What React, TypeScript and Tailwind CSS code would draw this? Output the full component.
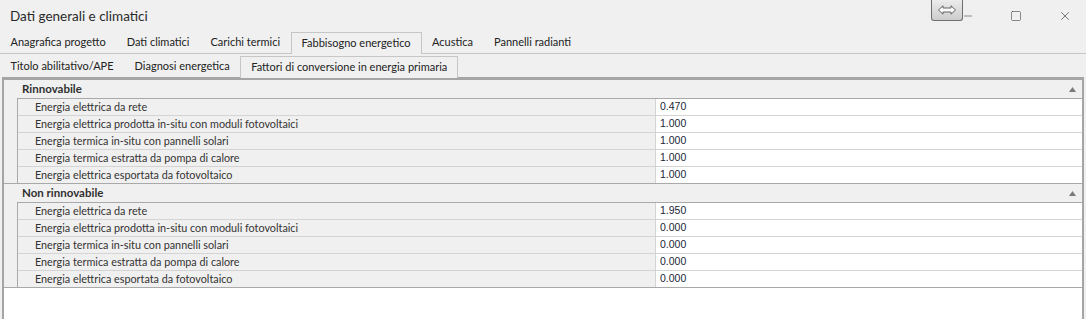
import { Minus, Square, X } from 'lucide-react'

const TOP_TABS = ['Anagrafica progetto', 'Dati climatici', 'Carichi termici', 'Fabbisogno energetico', 'Acustica', 'Pannelli radianti']
const SUB_TABS = ['Titolo abilitativo/APE', 'Diagnosi energetica', 'Fattori di conversione in energia primaria']

const LABELS = [
  'Energia elettrica da rete',
  'Energia elettrica prodotta in-situ con moduli fotovoltaici',
  'Energia termica in-situ con pannelli solari',
  'Energia termica estratta da pompa di calore',
  'Energia elettrica esportata da fotovoltaico',
]

const GROUPS = [
  { title: 'Rinnovabile', values: ['0.470', '1.000', '1.000', '1.000', '1.000'] },
  { title: 'Non rinnovabile', values: ['1.950', '0.000', '0.000', '0.000', '0.000'] },
]

function Tab({ label, active }: { label: string; active: boolean }) {
  if (active) {
    return (
      <div className="mb-[-1px] flex h-[22px] items-center border border-b-0 border-[#c6c6c6] bg-[#f0f0f0] px-[10px]">
        {label}
      </div>
    )
  }
  return <div className="flex h-[21px] items-center px-[10.5px]">{label}</div>
}

function Group({ title, values }: { title: string; values: string[] }) {
  return (
    <div className="border-b border-[#a9a9a9]">
      <div className="flex h-[18px] items-center justify-between pl-[18px] pr-[6px]">
        <span className="text-[11.5px] font-bold text-[#303030]">{title}</span>
        <svg width="7" height="5" viewBox="0 0 7 5"><path d="M0 5 L3.5 0 L7 5 Z" fill="#7a7a7a" /></svg>
      </div>
      {LABELS.map((label, i) => (
        <div key={label} className="flex h-[17px]">
          <div className="w-[14px] shrink-0 border-r border-[#a9a9a9]" />
          <div className={`flex flex-1 ${i === 0 ? 'border-t border-[#a9a9a9]' : 'border-t border-[#d4d4d4]'}`}>
            <div className="flex w-[637px] shrink-0 items-center pl-[17px] text-[#333]">{label}</div>
            <div className="flex flex-1 items-center border-l border-[#d4d4d4] bg-white pl-[4px] font-['Liberation_Sans',sans-serif] text-[10.5px] text-[#1c2536]">{values[i]}</div>
          </div>
        </div>
      ))}
    </div>
  )
}

export default function App() {
  return (
    <div className="h-[319px] w-[1086px] overflow-hidden bg-[#f0f0f0] font-['Lato',sans-serif] text-[10.8px] text-[#222]">
      <div className="flex h-[32px] items-center justify-between pl-[10px]">
        <span className="text-[13.5px] text-[#2a2a2a]">Dati generali e climatici</span>
        <div className="flex h-full items-center pr-[14px]">
          <div className="flex h-[21px] w-[32px] items-center justify-center self-start rounded-b-[3px] border border-t-0 border-[#6e6e6e] bg-gradient-to-b from-[#ececec] to-[#cdcdcd]">
            <svg width="18" height="10" viewBox="0 0 18 10">
              <path d="M0.5 5 L5 0.8 L5 3 L13 3 L13 0.8 L17.5 5 L13 9.2 L13 7 L5 7 L5 9.2 Z" fill="#fafafa" stroke="#555" strokeWidth="0.9" strokeLinejoin="round" />
            </svg>
          </div>
          <Minus className="ml-[-1px] size-[12px] text-[#444]" strokeWidth={1.2} />
          <div className="ml-[36px]"><Square className="size-[12px] text-[#444]" strokeWidth={1.2} /></div>
          <div className="ml-[36px]"><X className="size-[14px] text-[#444]" strokeWidth={1.2} /></div>
        </div>
      </div>

      <div className="flex h-[22px] items-end border-b border-[#c6c6c6] text-[11px]">
        {TOP_TABS.map((t) => <Tab key={t} label={t} active={t === 'Fabbisogno energetico'} />)}
      </div>

      <div className="flex h-[23px] items-end text-[11px]">
        {SUB_TABS.map((t) => <Tab key={t} label={t} active={t.startsWith('Fattori')} />)}
      </div>

      <div className="mx-[2px] h-[300px] border-x-2 border-t-[3px] border-[#a5a5a5] bg-white">
        <div className="bg-[#f0f0f0]">
          {GROUPS.map((g) => <Group key={g.title} title={g.title} values={g.values} />)}
        </div>
      </div>
    </div>
  )
}
